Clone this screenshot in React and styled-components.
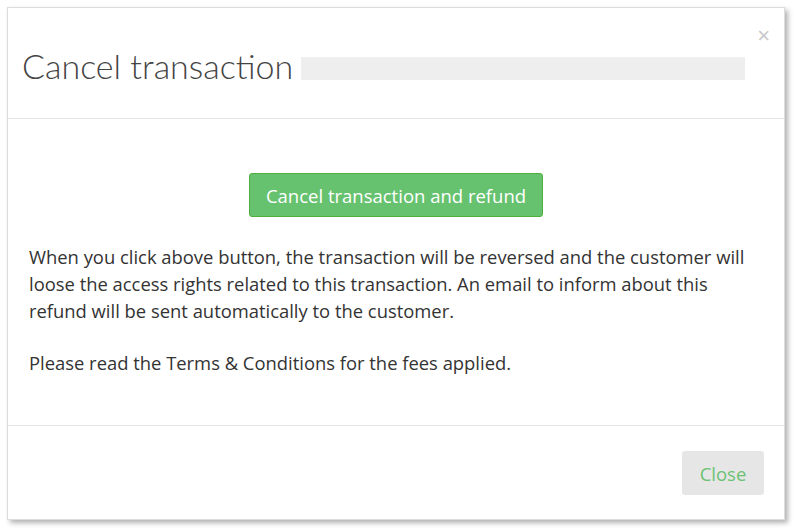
import React from "react";
import styled, { createGlobalStyle } from "styled-components";

const GlobalStyle = createGlobalStyle`
  html, body {
    margin: 0;
    padding: 0;
    background: #ffffff;
  }
  body {
    font-family: "Open Sans", "Liberation Sans", sans-serif;
  }
`;

const Page = styled.div`
  padding: 7px 9px 11px 7px;
`;

const Modal = styled.div`
  width: 778px;
  height: 513px;
  box-sizing: border-box;
  background: #fff;
  border: 1px solid #dcdcdc;
  box-shadow: 3px 3px 5px rgba(0, 0, 0, 0.3);
  display: flex;
  flex-direction: column;
`;

const Header = styled.div`
  height: 111px;
  box-sizing: border-box;
  border-bottom: 1px solid #e5e5e5;
  display: flex;
  align-items: flex-start;
  padding: 0 14px 0 14px;
`;

const Title = styled.h4`
  margin: 39px 0 0;
  font-family: "Lato", "Open Sans", sans-serif;
  font-weight: 300;
  font-size: 34px;
  line-height: 38px;
  color: #444;
  display: flex;
  align-items: center;
  flex: 1;
`;

const Placeholder = styled.span`
  display: inline-block;
  width: 444px;
  height: 23px;
  margin-left: 8px;
  margin-top: 4px;
  background: #eeeeee;
`;

const CloseX = styled.button`
  border: 0;
  background: none;
  padding: 0;
  margin-top: 17px;
  font-family: "Liberation Sans", sans-serif;
  font-size: 22px;
  line-height: 22px;
  color: #c8c8c8;
  cursor: pointer;
`;

const Body = styled.div`
  flex: 1;
  padding: 54px 21px 0;
  border-bottom: 1px solid #e5e5e5;
`;

const ButtonRow = styled.div`
  display: flex;
  justify-content: center;
  margin-bottom: 26px;
`;

const RefundButton = styled.button`
  width: 294px;
  height: 44px;
  box-sizing: border-box;
  background: #66c26f;
  border: 1px solid #4fae3f;
  border-radius: 3px;
  color: #fff;
  font-family: "Open Sans", sans-serif;
  font-size: 18.5px;
  cursor: pointer;
`;

const Text = styled.p`
  margin: 0 0 25px;
  font-size: 18.4px;
  line-height: 27px;
  color: #333;
`;

const Footer = styled.div`
  height: 93px;
  box-sizing: border-box;
  display: flex;
  justify-content: flex-end;
  align-items: flex-start;
  padding: 25px 20px 0;
`;

const CloseButton = styled.button`
  width: 82px;
  height: 44px;
  border: 0;
  border-radius: 3px;
  background: #e6e6e6;
  color: #6cc274;
  font-family: "Open Sans", sans-serif;
  font-size: 18.5px;
  cursor: pointer;
`;

export default function App() {
  return (
    <>
      <GlobalStyle />
      <Page>
        <Modal>
          <Header>
            <Title>
              Cancel transaction
              <Placeholder />
            </Title>
            <CloseX aria-label="Close">×</CloseX>
          </Header>
          <Body>
            <ButtonRow>
              <RefundButton>Cancel transaction and refund</RefundButton>
            </ButtonRow>
            <Text>
              When you click above button, the transaction will be reversed and the customer will
              loose the access rights related to this transaction. An email to inform about this
              refund will be sent automatically to the customer.
            </Text>
            <Text>Please read the Terms &amp; Conditions for the fees applied.</Text>
          </Body>
          <Footer>
            <CloseButton>Close</CloseButton>
          </Footer>
        </Modal>
      </Page>
    </>
  );
}
